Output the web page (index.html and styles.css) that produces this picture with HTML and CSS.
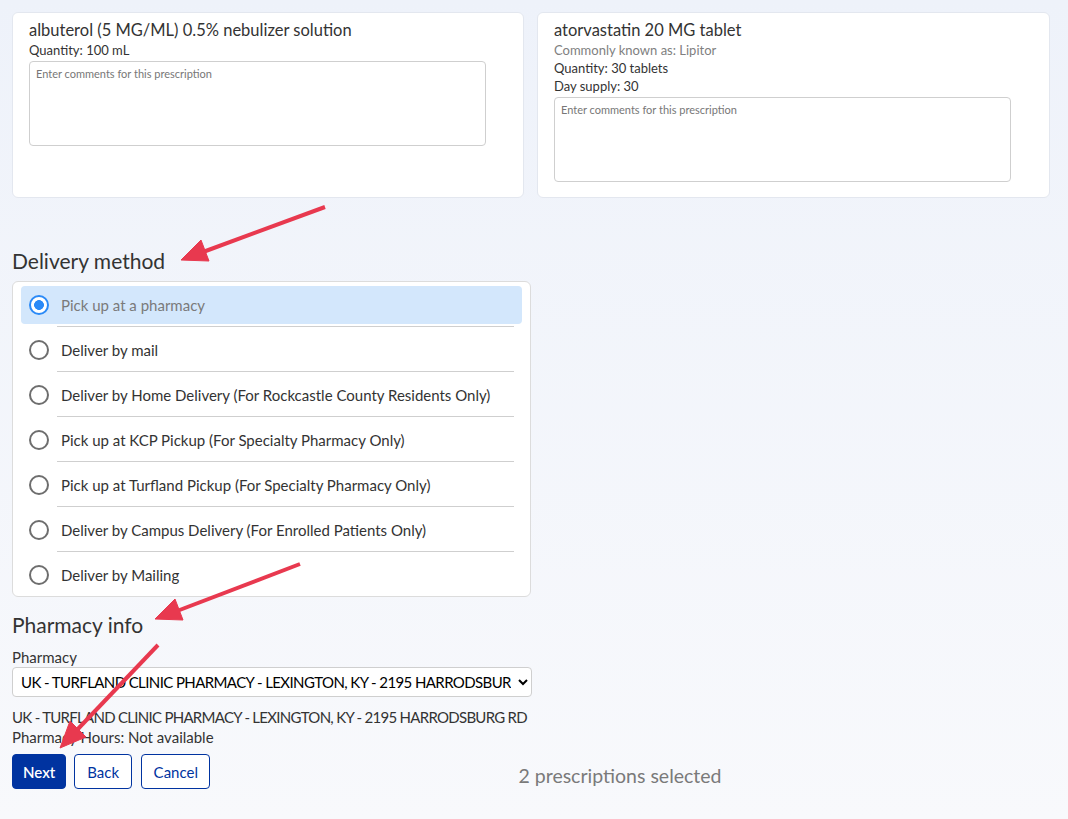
FILE: index.html
```html
<!DOCTYPE html>
<html lang="en">
<head>
<meta charset="utf-8">
<title>Delivery method</title>
<link rel="stylesheet" href="styles.css">
</head>
<body>
<main class="page">
  <section class="cards">
    <article class="card">
      <h2 class="drug">albuterol (5 MG/ML) 0.5% nebulizer solution</h2>
      <div class="meta">Quantity: 100 mL</div>
      <textarea class="comments" placeholder="Enter comments for this prescription"></textarea>
    </article>
    <article class="card">
      <h2 class="drug">atorvastatin 20 MG tablet</h2>
      <div class="meta muted">Commonly known as: Lipitor</div>
      <div class="meta">Quantity: 30 tablets</div>
      <div class="meta">Day supply: 30</div>
      <textarea class="comments" placeholder="Enter comments for this prescription"></textarea>
    </article>
  </section>

  <h3 class="section-title delivery-title">Delivery method</h3>
  <div class="options">
    <div class="option selected"><span class="radio"></span><span class="opt-text">Pick up at a pharmacy</span></div>
    <div class="sep"></div>
    <div class="option"><span class="radio"></span><span class="opt-text">Deliver by mail</span></div>
    <div class="sep"></div>
    <div class="option"><span class="radio"></span><span class="opt-text">Deliver by Home Delivery (For Rockcastle County Residents Only)</span></div>
    <div class="sep"></div>
    <div class="option"><span class="radio"></span><span class="opt-text">Pick up at KCP Pickup (For Specialty Pharmacy Only)</span></div>
    <div class="sep"></div>
    <div class="option"><span class="radio"></span><span class="opt-text">Pick up at Turfland Pickup (For Specialty Pharmacy Only)</span></div>
    <div class="sep"></div>
    <div class="option"><span class="radio"></span><span class="opt-text">Deliver by Campus Delivery (For Enrolled Patients Only)</span></div>
    <div class="sep"></div>
    <div class="option"><span class="radio"></span><span class="opt-text">Deliver by Mailing</span></div>
  </div>

  <h3 class="section-title pharmacy-title">Pharmacy info</h3>
  <label class="field-label" for="pharm">Pharmacy</label>
  <select id="pharm" class="pharm-select">
    <option>UK - TURFLAND CLINIC PHARMACY - LEXINGTON, KY - 2195 HARRODSBURG RD</option>
  </select>
  <div class="addr addr-first caps">UK - TURFLAND CLINIC PHARMACY - LEXINGTON, KY - 2195 HARRODSBURG RD</div>
  <div class="addr">Pharmacy Hours: Not available</div>

  <div class="footer">
    <button class="btn primary">Next</button>
    <button class="btn back">Back</button>
    <button class="btn cancel">Cancel</button>
    <div class="count">2 prescriptions selected</div>
  </div>
</main>

<svg class="annotations" width="1068" height="819" viewBox="0 0 1068 819">
  <g fill="#e8394f" stroke="#e8394f">
    <line x1="325" y1="207" x2="203" y2="252" stroke-width="4"/>
    <polygon points="181,260 209,261 201,240" stroke-width="1" stroke-linejoin="round"/>
    <line x1="300" y1="564" x2="177" y2="611" stroke-width="4"/>
    <polygon points="155,619 183,620 175,599" stroke-width="1" stroke-linejoin="round"/>
    <line x1="158" y1="645" x2="76" y2="731" stroke-width="4"/>
    <polygon points="60,748 86,737 70,721" stroke-width="1" stroke-linejoin="round"/>
  </g>
</svg>
</body>
</html>
```

FILE: styles.css
```css
* { box-sizing: border-box; }
html, body { margin: 0; padding: 0; }
body {
  width: 1068px;
  min-height: 819px;
  background: linear-gradient(#eef2fa, #f8f9fc);
  font-family: Lato, "Liberation Sans", sans-serif;
  color: #333;
  position: relative;
}
.page { padding: 12px 18px 20px 12px; }

.cards {
  display: grid;
  grid-template-columns: 512px 513px;
  gap: 13px;
}
.card {
  background: #fff;
  border: 1px solid #e3e7ef;
  border-radius: 6px;
  padding: 6px 16px 15px 16px;
  display: flex;
  flex-direction: column;
  align-items: flex-start;
}
.drug {
  margin: 0;
  font-size: 16.5px;
  font-weight: 400;
  line-height: 22px;
  color: #333;
}
.meta { font-size: 13px; line-height: 18px; color: #333; }
.meta.muted { color: #808080; }
.comments {
  margin-top: 2px;
  width: 457px;
  height: 85px;
  border: 1px solid #cfcfcf;
  border-radius: 4px;
  padding: 5px 6px;
  font-family: Lato, "Liberation Sans", sans-serif;
  font-size: 11px;
  resize: none;
  background: #fff;
}
.comments::placeholder { color: #777; }

.section-title {
  margin: 0;
  font-size: 21px;
  font-weight: 400;
  line-height: 26px;
  color: #333;
}
.delivery-title { margin-top: 50px; margin-bottom: 7px; }
.pharmacy-title { margin-top: 15px; margin-bottom: 9px; }

.options {
  width: 519px;
  background: #fff;
  border: 1px solid #dcdcdc;
  border-radius: 6px;
  padding: 4px 8px 2px 8px;
}
.option {
  height: 38px;
  display: flex;
  align-items: center;
  padding-left: 8px;
  border-radius: 4px;
  font-size: 15px;
  color: #333;
}
.option.selected { background: #d3e7fc; }
.option.selected .opt-text { color: #7a7a7a; }
.radio {
  width: 20px;
  height: 20px;
  border: 2px solid #6e6e6e;
  border-radius: 50%;
  background: #fff;
  margin-right: 12px;
  flex: none;
}
.option.selected .radio {
  border: 2.5px solid #2b8af7;
  background: radial-gradient(circle, #2b8af7 0 4.6px, #fff 5.2px);
}
.sep {
  height: 1px;
  background: #cfcfcf;
  margin: 2px 8px 4px 36px;
}

.field-label { display: block; font-size: 15px; line-height: 20px; color: #333; }
.pharm-select {
  display: block;
  width: 520px;
  height: 30px;
  border: 1px solid #cfcfcf;
  border-radius: 4px;
  background: #fff;
  color: #000;
  font-family: Lato, "Liberation Sans", sans-serif;
  font-size: 15px;
  letter-spacing: -0.6px;
  padding: 0 4px;
}
.addr { font-size: 15px; line-height: 20px; color: #333; }
.addr.caps { letter-spacing: -0.72px; }
.addr-first { margin-top: 10px; }

.footer {
  margin-top: 7px;
  display: flex;
  align-items: center;
  gap: 8px;
}
.btn {
  height: 35px;
  padding: 0 11px;
  border: 1px solid #0033a0;
  border-radius: 4px;
  background: #fff;
  color: #0033a0;
  font-family: Lato, "Liberation Sans", sans-serif;
  font-size: 15px;
}
.btn.primary { background: #0033a0; color: #fff; font-weight: 600; padding: 0 10px; }
.btn.back { padding: 0 12px; }
.btn.cancel { padding: 0 11.5px; margin-left: 1px; }
.count {
  margin-left: 300px;
  margin-top: 8px;
  font-size: 19.5px;
  color: #7a7a7a;
}

.annotations {
  position: absolute;
  left: 0;
  top: 0;
  pointer-events: none;
}
```
